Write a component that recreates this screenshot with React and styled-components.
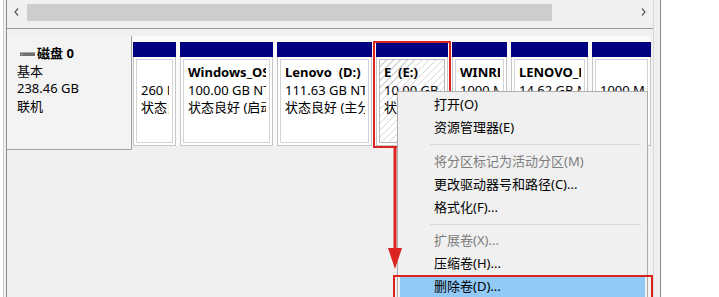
import React from 'react';
import styled, { createGlobalStyle } from 'styled-components';

const GlobalStyle = createGlobalStyle`
  html, body {
    margin: 0;
    padding: 0;
    overflow: hidden;
    background: #fff;
  }
  body {
    font-family: "Noto Sans", "Noto Sans CJK SC", sans-serif;
    font-size: 13px;
    color: #000;
  }
`;

const RED = '#dc2320';

const partitions = [
  { width: 43, name: '', size: '260 MB', status: '状态良好 (EFI 系统分区)' },
  { width: 93, name: 'Windows_OS (C:)', size: '100.00 GB NTFS', status: '状态良好 (启动, 页面文件)' },
  { width: 95, name: 'Lenovo  (D:)', size: '111.63 GB NTFS', status: '状态良好 (主分区)' },
  { width: 72, name: 'E  (E:)', size: '10.00 GB NTFS', status: '状态良好 (主分区)', selected: true },
  { width: 55, name: 'WINRE_DRV', size: '1000 MB NTFS', status: '状态良好 (OEM 分区)' },
  { width: 77, name: 'LENOVO_PART', size: '14.62 GB NTFS', status: '状态良好 (OEM 分区)' },
  { width: 59, name: '', size: '1000 MB', status: '状态良好 (恢复分区)' },
];

const menuItems = [
  { label: '打开(O)' },
  { label: '资源管理器(E)' },
  { sep: true, h: 11 },
  { label: '将分区标记为活动分区(M)', disabled: true },
  { label: '更改驱动器号和路径(C)...' },
  { label: '格式化(F)...' },
  { sep: true, h: 10 },
  { label: '扩展卷(X)...', disabled: true },
  { label: '压缩卷(H)...' },
  { label: '删除卷(D)...', active: true },
];

const Page = styled.div`
  position: relative;
  width: 719px;
  height: 297px;
  overflow: hidden;
  background: #fff;
`;

const Window = styled.div`
  box-sizing: border-box;
  margin-left: 3px;
  width: 658px;
  height: 297px;
  padding: 0 6px 0 2px;
  border-left: 1px solid #cdcdcd;
  border-right: 1px solid #8a8a8a;
  background: #f0f0f0;
`;

const Pane = styled.div`
  box-sizing: border-box;
  height: 100%;
  display: flex;
  flex-direction: column;
  border-left: 1px solid #8c8c8c;
  border-right: 1px solid #d8d8d8;
`;

const ScrollBar = styled.div`
  box-sizing: border-box;
  height: 29px;
  display: flex;
  align-items: flex-start;
  border-bottom: 1px solid #9a9a9a;
  background: #f0f0f0;
`;

const ArrowCell = styled.div`
  width: 19px;
  height: 24px;
  display: flex;
  align-items: center;
  justify-content: center;
  flex-shrink: 0;
`;

const Thumb = styled.div`
  width: 525px;
  height: 17px;
  margin-top: 4px;
  margin-left: 1px;
  background: #cdcdcd;
`;

const Track = styled.div`
  flex: 1;
`;

const Lower = styled.div`
  flex: 1;
  padding-top: 7px;
`;

const DiskRow = styled.div`
  display: flex;
  align-items: flex-start;
`;

const LabelBox = styled.div`
  box-sizing: border-box;
  width: 125px;
  height: 114px;
  padding: 9px 0 0 10px;
  background: #f3f3f3;
  border-right: 1px solid #a3a3a3;
  border-bottom: 1px solid #a3a3a3;
  line-height: 17.6px;
`;

const DiskTitle = styled.div`
  display: flex;
  align-items: center;
  gap: 2px;
  padding-left: 3px;
  font-weight: 700;
`;

const Strip = styled.div`
  display: flex;
  gap: 4px;
  margin-left: 1px;
  padding-top: 6px;
  background: #fafafa;
`;

const Column = styled.div`
  width: ${(p) => p.$w}px;
  display: flex;
  flex-direction: column;
`;

const Header = styled.div`
  height: 15px;
  background: #000080;
`;

const Body = styled.div`
  box-sizing: border-box;
  height: 89px;
  padding: 2px;
  background: #fff;
  border: 1px solid #c6c6c6;
  border-top: none;
`;

const Inner = styled.div`
  box-sizing: border-box;
  height: 100%;
  padding: 4px 3px 0 4px;
  border: 1px solid ${(p) => (p.$selected ? '#b8b8b8' : '#d3d3d3')};
  background: ${(p) =>
    p.$selected
      ? 'repeating-linear-gradient(135deg, #ffffff 0 4px, #d6d6d6 4px 5px)'
      : '#fff'};
`;

const Clip = styled.div`
  overflow: hidden;
  white-space: pre;
  line-height: 17.6px;
`;

const Name = styled.div`
  font-weight: 700;
  height: 17.6px;
`;

const Menu = styled.div`
  position: absolute;
  left: 397px;
  top: 91px;
  width: 251px;
  height: 230px;
  box-sizing: border-box;
  padding: 1px 2px;
  background: #f0f0f0;
  border: 1px solid #acacac;
`;

const Item = styled.div`
  height: 23px;
  line-height: 23px;
  padding-left: 34px;
  white-space: nowrap;
  color: ${(p) => (p.$disabled ? '#7d7d7d' : '#000')};
  background: ${(p) => (p.$active ? '#91c9f7' : 'transparent')};
`;

const Separator = styled.div`
  height: ${(p) => p.$h}px;
  display: flex;
  align-items: center;
  padding-left: 30px;
  padding-right: 4px;
  &::after {
    content: '';
    flex: 1;
    height: 1px;
    background: #d9d9d9;
  }
`;

const Callout = styled.div`
  position: absolute;
  box-sizing: border-box;
  left: ${(p) => p.$x}px;
  top: ${(p) => p.$y}px;
  width: ${(p) => p.$w}px;
  height: ${(p) => p.$h}px;
  border: 2px solid ${RED};
`;

const ArrowSvg = styled.svg`
  position: absolute;
  left: 386px;
  top: 146px;
`;

const Chevron = ({ dir }) => (
  <svg width="5" height="8" viewBox="0 0 5 8">
    <path
      d={dir === 'left' ? 'M4 0.5 L1 4 L4 7.5' : 'M1 0.5 L4 4 L1 7.5'}
      fill="none"
      stroke="#5a5a5a"
      strokeWidth="1.2"
    />
  </svg>
);

const DriveIcon = () => (
  <svg width="15" height="6" viewBox="0 0 15 6">
    <rect x="0" y="1" width="15" height="4" fill="#6f6f6f" />
    <rect x="0" y="1" width="15" height="1" fill="#a8a8a8" />
    <rect x="1" y="3" width="2" height="1" fill="#7fc07f" />
  </svg>
);

export default function App() {
  return (
    <Page>
      <GlobalStyle />
      <Window>
        <Pane>
          <ScrollBar>
            <ArrowCell>
              <Chevron dir="left" />
            </ArrowCell>
            <Thumb />
            <Track />
            <ArrowCell>
              <Chevron dir="right" />
            </ArrowCell>
          </ScrollBar>
          <Lower>
            <DiskRow>
              <LabelBox>
                <DiskTitle>
                  <DriveIcon />
                  <span>磁盘 0</span>
                </DiskTitle>
                <div>基本</div>
                <div>238.46 GB</div>
                <div>联机</div>
              </LabelBox>
              <Strip>
                {partitions.map((p, i) => (
                  <Column key={i} $w={p.width}>
                    <Header />
                    <Body>
                      <Inner $selected={p.selected}>
                        <Clip>
                          <Name>{p.name}</Name>
                          <div>{p.size}</div>
                          <div>{p.status}</div>
                        </Clip>
                      </Inner>
                    </Body>
                  </Column>
                ))}
              </Strip>
            </DiskRow>
          </Lower>
        </Pane>
      </Window>

      <Callout $x={373} $y={41} $w={78} $h={107} />

      <Menu>
        {menuItems.map((m, i) =>
          m.sep ? (
            <Separator key={i} $h={m.h} />
          ) : (
            <Item key={i} $disabled={m.disabled} $active={m.active}>
              {m.label}
            </Item>
          )
        )}
      </Menu>

      <Callout $x={393} $y={275} $w={260} $h={30} />

      <ArrowSvg width="18" height="126" viewBox="0 0 18 126">
        <line x1="9" y1="0" x2="9" y2="104" stroke={RED} strokeWidth="3" />
        <path d="M2 102 L16 102 L9 123 Z" fill={RED} />
      </ArrowSvg>
    </Page>
  );
}
